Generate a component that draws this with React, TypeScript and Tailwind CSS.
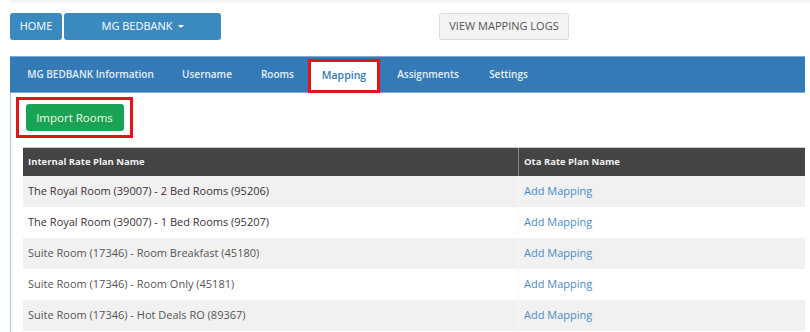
const tabs = [
  { label: "MG BEDBANK Information", w: "w-[153px]" },
  { label: "Username", w: "w-[80px]" },
  { label: "Rooms", w: "w-[61px]" },
  { label: "Mapping", w: "w-[72px]", active: true },
  { label: "Assignments", w: "w-[96px]" },
  { label: "Settings", w: "w-[65px]" },
];

const rows = [
  { name: "The Royal Room (39007) - 2 Bed Rooms (95206)", dark: true },
  { name: "The Royal Room (39007) - 1 Bed Rooms (95207)", dark: true },
  { name: "Suite Room (17346) - Room Breakfast (45180)" },
  { name: "Suite Room (17346) - Room Only (45181)" },
  { name: "Suite Room (17346) - Hot Deals RO (89367)" },
];

export default function App() {
  return (
    <div
      className="w-[810px] h-[332px] overflow-hidden bg-white"
      style={{ fontFamily: '"Open Sans", "Liberation Sans", sans-serif' }}
    >
      <div className="ml-[10px] h-[3px] bg-[#f6f6f6]" />

      <div className="mt-[10px] ml-[10px] flex items-start">
        <button className="w-[52px] h-[27px] rounded-[3px] bg-[#3a8abf] text-white text-[11px] font-medium">
          HOME
        </button>
        <button className="ml-[2px] w-[157px] h-[27px] rounded-[3px] bg-[#3a8abf] text-white text-[11px] font-medium flex items-center justify-center gap-[5px]">
          MG BEDBANK
          <span className="w-0 h-0 border-l-[3px] border-r-[3px] border-t-[3px] border-l-transparent border-r-transparent border-t-white" />
        </button>
        <button className="ml-[218px] w-[130px] h-[27px] rounded-[3px] bg-[#f3f3f3] border border-[#dcdcdc] text-[#555] text-[11px]">
          VIEW MAPPING LOGS
        </button>
      </div>

      <div className="mt-[16px] ml-[10px] w-[795px] h-[37px] bg-[#337ab7] border-y border-[#7ea9d4] flex items-center pl-[4px]">
        {tabs.map((t) =>
          t.active ? (
            <div
              key={t.label}
              className={`${t.w} h-[34px] mt-[2px] border-[3px] border-[#e3141b] bg-white flex items-center justify-center text-[10.5px] font-semibold text-[#337ab7]`}
            >
              {t.label}
            </div>
          ) : (
            <div
              key={t.label}
              className={`${t.w} h-full flex items-center justify-center text-[10px] font-semibold text-[#e6eef6]`}
            >
              {t.label}
            </div>
          )
        )}
      </div>

      <div className="ml-[10px] border-l border-[#a9c7e4] h-[250px]">
        <div className="pt-[4px] pl-[5px]">
          <div className="w-[117px] h-[41px] border-[3px] border-[#e3141b] flex items-center justify-center">
            <button className="w-[98px] h-[27px] rounded-[3px] bg-[#1aa354] text-[#f4fbe8] text-[11.5px] font-medium">
              Import Rooms
            </button>
          </div>
        </div>

        <div className="mt-[9px] ml-[12px] w-[782px] text-[11px]">
          <div className="flex h-[29px] bg-[#444] border-t border-[#cfcfcf] text-[#f2f2f2] text-[9.5px] font-bold">
            <div className="w-[495px] flex items-center pl-[5px]">
              Internal Rate Plan Name
            </div>
            <div className="flex-1 flex items-center pl-[5px] border-l border-[#8a8a8a]">
              Ota Rate Plan Name
            </div>
          </div>
          {rows.map((r, i) => (
            <div
              key={r.name}
              className={`flex h-[31px] ${i % 2 === 0 ? "bg-[#f1f1f1]" : "bg-white"}`}
            >
              <div
                className={`w-[495px] flex items-center pl-[5px] ${r.dark ? "text-[#3d3038]" : "text-[#555]"}`}
              >
                {r.name}
              </div>
              <div className="flex-1 flex items-center pl-[5px] border-l border-[#f7f7f7] text-[#4a8bc6]">
                Add Mapping
              </div>
            </div>
          ))}
        </div>
      </div>
    </div>
  );
}
